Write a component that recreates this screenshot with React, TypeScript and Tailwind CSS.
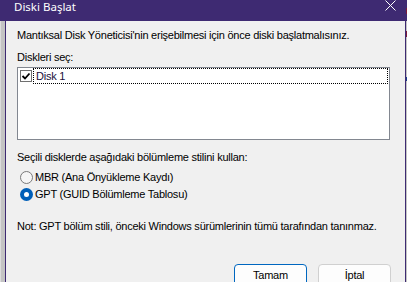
import React from "react";

export default function App() {
  const body = { fontFamily: '"Liberation Sans", Arial, sans-serif' };
  return (
    <div className="w-[407px] h-[282px] overflow-hidden bg-[#c6c6c6] flex flex-col" style={body}>
      {/* title bar */}
      <div className="h-[21px] flex shrink-0">
        <div className="w-[406px] h-full bg-[#3e2a72] relative flex items-start">
          <span
            className="ml-[14px] mt-[-1px] text-white text-[11.5px] leading-[16px]"
            style={{ fontFamily: '"Noto Sans", "Open Sans", sans-serif' }}
          >
            Diski Başlat
          </span>
          <svg className="absolute left-[385px] top-[0px]" width="11" height="11" viewBox="0 0 11 11">
            <path d="M0.5 0.5 L10.5 10.5 M10.5 0.5 L0.5 10.5" stroke="#ffffff" strokeWidth="1" fill="none" />
          </svg>
        </div>
        <div className="w-[1px] h-full flex flex-col">
          <div className="h-[8px] bg-[#3e2a72]" />
          <div className="h-[6px] bg-[#7a1a3a]" />
          <div className="flex-1 bg-[#3e2a72]" />
        </div>
      </div>
      <div className="flex flex-1">
        <div className="w-[5px] bg-[#c4c4c4] border-l border-[#dcdcdc]" />
        <div className="w-[1px] bg-[#3e2a72]" />
        <div className="w-[399px] bg-[#f0f0f0] flex flex-col pl-[11px] text-[11px] leading-[13px] tracking-[-0.24px] text-black">
          <div className="mt-[8px] h-[13px] whitespace-nowrap">
            Mantıksal Disk Yöneticisi'nin erişebilmesi için önce diski başlatmalısınız.
          </div>
          <div className="mt-[9px] h-[13px]">Diskleri seç:</div>
          <div className="mt-[3px] w-[373px] h-[73px] border border-[#828790] bg-white flex flex-col">
            <div className="h-[16px] flex items-center pl-[2px]">
              <div className="w-[12px] h-[12px] border border-[#707070] bg-white flex items-center justify-center shrink-0">
                <svg width="10" height="10" viewBox="0 0 10 10">
                  <path d="M1.5 5 L4 7.5 L8.5 2.5" stroke="#000" strokeWidth="1.8" fill="none" />
                </svg>
              </div>
              <div className="flex-1 h-[16px] ml-[1px] mr-[1px] border border-dotted border-black flex items-center pl-[2px]">
                <span className="text-[#1a0f3c]">Disk 1</span>
              </div>
            </div>
          </div>
          <div className="mt-[11px] h-[13px]">Seçili disklerde aşağıdaki bölümleme stilini kullan:</div>
          <div className="mt-[5px] h-[17px] flex items-center pl-[3px]">
            <div className="w-[13px] h-[13px] rounded-full border border-[#7a7a7a] bg-[#f6f6f6] shrink-0" />
            <span className="ml-[2px]">MBR (Ana Önyükleme Kaydı)</span>
          </div>
          <div className="h-[17px] flex items-center pl-[3px]">
            <div className="w-[13px] h-[13px] rounded-full bg-[#005fb8] flex items-center justify-center shrink-0">
              <div className="w-[5px] h-[5px] rounded-full bg-white" />
            </div>
            <span className="ml-[2px]">GPT (GUID Bölümleme Tablosu)</span>
          </div>
          <div className="mt-[17px] h-[13px] whitespace-nowrap">
            Not: GPT bölüm stili, önceki Windows sürümlerinin tümü tarafından tanınmaz.
          </div>
          <div className="mt-[31px] flex justify-end gap-[11px] pr-[14px]">
            <div className="w-[73px] h-[23px] rounded-[4px] border border-[#0067c0] bg-[#fdfdfd] flex items-center justify-center">
              Tamam
            </div>
            <div className="w-[73px] h-[23px] rounded-[4px] border border-[#d0d0d0] bg-[#fdfdfd] flex items-center justify-center">
              İptal
            </div>
          </div>
        </div>
        <div className="w-[1px] bg-[#3e2a72]" />
        <div className="w-[1px] flex flex-col bg-[#c4c4c4]">
          <div className="h-[10px]" />
          <div className="h-[6px] bg-[#7a1a3a]" />
          <div className="h-[40px]" />
          <div className="h-[4px] bg-[#1a3a8a]" />
        </div>
      </div>
    </div>
  );
}
